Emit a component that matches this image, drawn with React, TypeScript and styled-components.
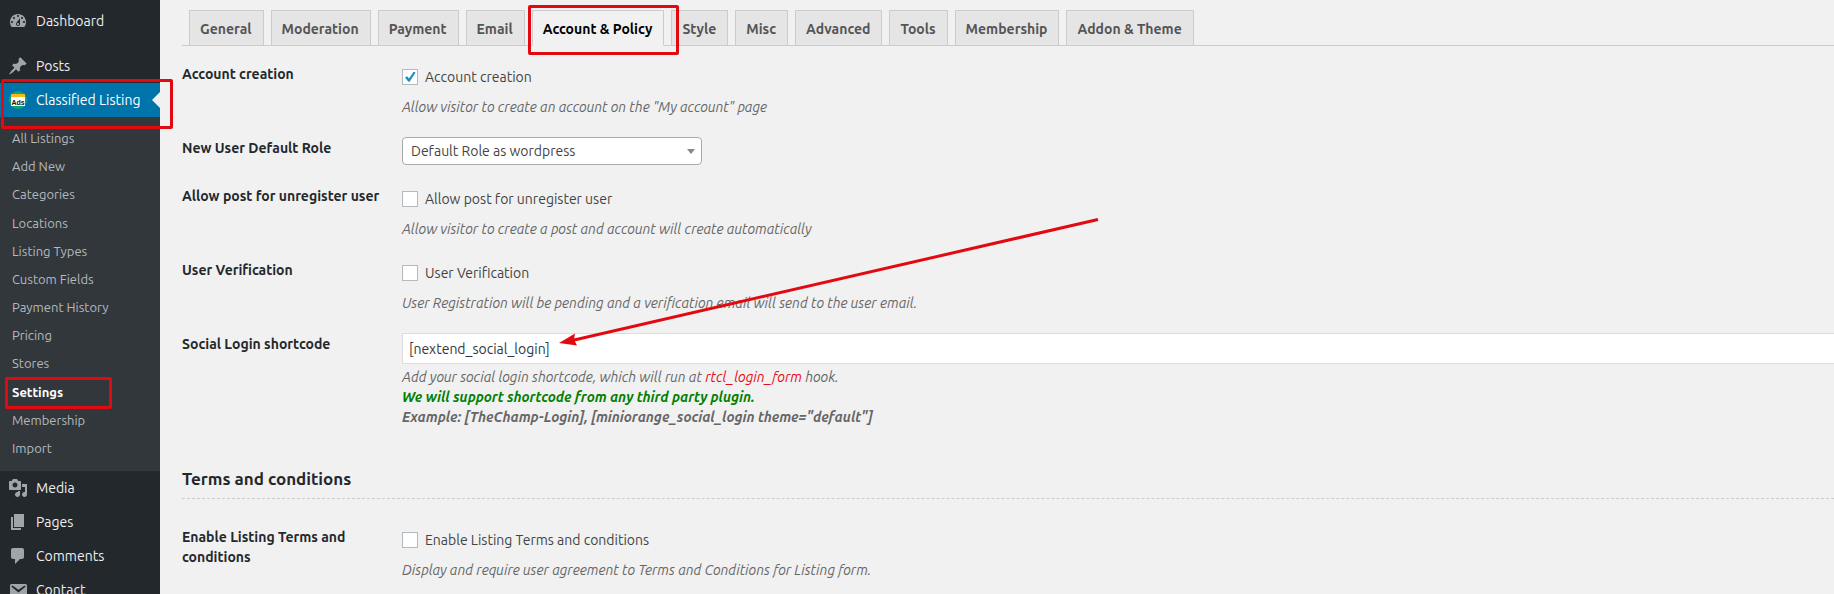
import React from "react";
import styled, { createGlobalStyle, css } from "styled-components";

const RED = "#e20a10";

const GlobalStyle = createGlobalStyle`
  *, *::before, *::after { box-sizing: border-box; }
  body {
    margin: 0;
    background: #f1f1f1;
    color: #444;
    font: 14px/20px Ubuntu, "Open Sans", "Noto Sans", sans-serif;
  }
`;

const Shell = styled.div`
  position: relative;
  display: flex;
  height: 100vh;
  overflow: hidden;
`;

/* ---------- Sidebar ---------- */

const Sidebar = styled.nav`
  flex: 0 0 160px;
  padding-top: 4px;
  background: #23282d;
`;

const MenuGroup = styled.ul`
  margin: 0 0 11px;
  padding: 0;
  list-style: none;
`;

const MenuItem = styled.li`
  position: relative;
`;

const MenuLink = styled.a<{ $current?: boolean }>`
  position: relative;
  display: flex;
  align-items: center;
  gap: 8px;
  height: 34px;
  padding-left: 8px;
  color: #eee;
  text-decoration: none;
  white-space: nowrap;

  ${({ $current }) =>
    $current &&
    css`
      background: #0073aa;
      color: #fff;

      &::after {
        content: "";
        position: absolute;
        right: 0;
        top: 9px;
        border: solid transparent;
        border-width: 8px 8px 8px 0;
        border-right-color: #f1f1f1;
      }
    `}
`;

const MenuIcon = styled.svg`
  flex: none;
  width: 20px;
  height: 20px;
  fill: #a0a5aa;
`;

const Submenu = styled.ul`
  display: grid;
  grid-auto-rows: 1fr;
  min-height: 354px;
  margin: 0;
  padding: 7px 0 9px;
  list-style: none;
  background: #32373c;
`;

const SubmenuItem = styled.li`
  position: relative;
  display: flex;
  align-items: center;
  padding-left: 12px;
`;

const SubmenuLink = styled.a<{ $current?: boolean }>`
  font-size: 13px;
  font-weight: ${({ $current }) => ($current ? 700 : 400)};
  color: ${({ $current }) => ($current ? "#fff" : "#b4b9be")};
  text-decoration: none;
`;

/* ---------- Annotations ---------- */

const Highlight = styled.span<{ $inset: string }>`
  position: absolute;
  z-index: 2;
  inset: ${({ $inset }) => $inset};
  border: 3px solid ${RED};
  border-radius: 2px;
  pointer-events: none;
`;

const Arrow = styled.svg`
  position: absolute;
  z-index: 3;
  left: 558px;
  top: 216px;
  width: 544px;
  height: 132px;
  pointer-events: none;
`;

/* ---------- Main ---------- */

const Main = styled.main`
  flex: 1;
  min-width: 0;
  padding: 10px 0 0 22px;
`;

const Tabs = styled.nav`
  display: flex;
  gap: 7px;
  padding-left: 7px;
  border-bottom: 1px solid #ccc;
  margin-bottom: 7px;
`;

const Tab = styled.a<{ $active?: boolean }>`
  position: relative;
  margin-bottom: -1px;
  padding: 6px 11px 4px 10px;
  border: 1px solid #ccc;
  border-bottom-color: ${({ $active }) => ($active ? "#f1f1f1" : "#ccc")};
  background: ${({ $active }) => ($active ? "#f1f1f1" : "#e5e5e5")};
  color: ${({ $active }) => ($active ? "#000" : "#555")};
  font-weight: 700;
  line-height: 24px;
  text-decoration: none;
  white-space: nowrap;
`;

const Row = styled.div`
  display: grid;
  grid-template-columns: 210px 1fr;
  column-gap: 10px;
  padding: 10px 0;
`;

const titleStyle = css`
  padding-top: 1px;
  color: #23282d;
  font-weight: 700;
`;

const RowTitle = styled.div`
  ${titleStyle}
`;

const RowTitleLabel = styled.label`
  ${titleStyle}
`;

const CheckLabel = styled.label`
  display: flex;
  align-items: center;
  gap: 7px;
  height: 28px;
`;

const Checkbox = styled.input`
  appearance: none;
  flex: none;
  width: 16px;
  height: 16px;
  margin: 0;
  border: 1px solid #b4b9be;
  background: #fff;

  &:checked {
    background: #fff
      url("data:image/svg+xml,%3Csvg xmlns='http://www.w3.org/2000/svg' viewBox='0 0 14 14'%3E%3Cpath d='M2 7.6 4 6.2 6 8.6 10.6 1.8 12.6 2.6 6.6 11.8 5.4 11.8Z' fill='%231e8cbe'/%3E%3C/svg%3E")
      center / 14px 14px no-repeat;
  }
`;

const Description = styled.p<{ $tight?: boolean }>`
  margin: ${({ $tight }) => ($tight ? 3 : 6)}px 0 0;
  color: #666;
  font-style: italic;
`;

const Hook = styled.span`
  color: #e60a14;
`;

const Support = styled.strong`
  color: green;
  font-weight: 700;
`;

const Example = styled.strong`
  font-weight: 700;
`;

const SelectWrap = styled.div`
  position: relative;
  width: 300px;

  &::after {
    content: "";
    position: absolute;
    right: 7px;
    top: 12px;
    border: solid transparent;
    border-width: 5px 4px 0;
    border-top-color: #888;
  }
`;

const Select = styled.select`
  appearance: none;
  display: block;
  width: 100%;
  height: 28px;
  padding: 0 24px 0 8px;
  border: 1px solid #aaa;
  border-radius: 4px;
  background: #fff;
  color: #444;
  font: inherit;
`;

const TextInput = styled.input`
  display: block;
  width: 100%;
  height: 31px;
  padding: 0 6px;
  border: 1px solid #ddd;
  border-right: 0;
  background: #fff;
  color: #32373c;
  font: inherit;
`;

const SectionHeading = styled.h2`
  margin: 31px 0 17px;
  padding-bottom: 8px;
  border-bottom: 1px dashed #ccc;
  color: #23282d;
  font-size: 17px;
  font-weight: 700;
  line-height: 22px;
`;

const icons: Record<string, string> = {
  dashboard:
    "M3.76 16h12.48c1.1-1.37 1.76-3.11 1.76-5 0-4.42-3.58-8-8-8s-8 3.58-8 8c0 1.89.66 3.63 1.76 5zM10 4c.55 0 1 .45 1 1s-.45 1-1 1-1-.45-1-1 .45-1 1-1zM6 6c.55 0 1 .45 1 1s-.45 1-1 1-1-.45-1-1 .45-1 1-1zm8 0c.55 0 1 .45 1 1s-.45 1-1 1-1-.45-1-1 .45-1 1-1zm-5.37 5.55L12 7v6c0 1.1-.9 2-2 2s-2-.9-2-2c0-.57.24-1.08.63-1.45zM4 10c.55 0 1 .45 1 1s-.45 1-1 1-1-.45-1-1 .45-1 1-1zm12 0c.55 0 1 .45 1 1s-.45 1-1 1-1-.45-1-1 .45-1 1-1zm-5 3c0-.55-.45-1-1-1s-1 .45-1 1 .45 1 1 1 1-.45 1-1z",
  posts:
    "M10.44 3.02l1.82-1.82 6.36 6.35-1.83 1.82c-1.05-.68-2.48-.57-3.41.36l-.75.75c-.92.93-1.04 2.35-.35 3.41l-1.83 1.82-2.41-2.41-2.8 2.79c-.42.42-3.38 2.71-3.8 2.29s1.86-3.39 2.28-3.81l2.79-2.79L4.1 9.36l1.83-1.82c1.05.69 2.48.57 3.4-.36l.75-.75c.93-.92 1.05-2.35.36-3.41z",
  media:
    "M13 11V4c0-.55-.45-1-1-1h-1.67L9 1H5L3.67 3H2c-.55 0-1 .45-1 1v7c0 .55.45 1 1 1h10c.55 0 1-.45 1-1zM7 4.5c1.38 0 2.5 1.12 2.5 2.5S8.38 9.5 7 9.5 4.5 8.38 4.5 7 5.62 4.5 7 4.5zM14 6h5v10.5c0 1.38-1.12 2.5-2.5 2.5S14 17.88 14 16.5s1.12-2.5 2.5-2.5c.17 0 .34.02.5.05V9h-3V6zm-4 8.05V13h2v3.5c0 1.38-1.12 2.5-2.5 2.5S7 17.88 7 16.5 8.12 14 9.5 14c.17 0 .34.02.5.05z",
  pages: "M6 15V2h10v13H6zm-1 1h8v2H3V5h2v11z",
  comments:
    "M5 2h9c1.1 0 2 .9 2 2v7c0 1.1-.9 2-2 2h-2l-5 5v-5H5c-1.1 0-2-.9-2-2V4c0-1.1.9-2 2-2z",
  contact:
    "M3.87 4h13.25C18.37 4 19 4.59 19 5.79v8.42c0 1.19-.63 1.79-1.88 1.79H3.87c-1.25 0-1.88-.6-1.88-1.79V5.79C1.99 4.59 2.62 4 3.87 4zm6.62 8.6l6.74-5.53c.24-.2.43-.66.13-1.07-.29-.41-.82-.42-1.17-.17l-5.7 3.86L4.8 5.83c-.35-.25-.88-.24-1.17.17-.3.41-.11.87.13 1.07z",
};

function Icon({ name }: { name: string }) {
  return (
    <MenuIcon viewBox="0 0 20 20" aria-hidden="true">
      <path fillRule="evenodd" d={icons[name]} />
    </MenuIcon>
  );
}

function AdsIcon() {
  return (
    <MenuIcon viewBox="0 0 20 20" aria-hidden="true">
      <circle cx="10" cy="10" r="9" fill="#0fa573" />
      <rect x="3" y="4" width="14" height="4" fill="#fbb81b" />
      <rect x="3" y="7" width="14" height="9" fill="#fff" />
      <text
        x="10"
        y="15"
        textAnchor="middle"
        fontFamily="'Liberation Sans', sans-serif"
        fontSize="7"
        fontWeight="700"
        fill="#111"
      >
        Ads
      </text>
    </MenuIcon>
  );
}

const submenu = [
  "All Listings",
  "Add New",
  "Categories",
  "Locations",
  "Listing Types",
  "Custom Fields",
  "Payment History",
  "Pricing",
  "Stores",
  "Settings",
  "Membership",
  "Import",
];

const tabs = [
  "General",
  "Moderation",
  "Payment",
  "Email",
  "Account & Policy",
  "Style",
  "Misc",
  "Advanced",
  "Tools",
  "Membership",
  "Addon & Theme",
];

function MenuEntry({ icon, label }: { icon: string; label: string }) {
  return (
    <MenuItem>
      <MenuLink href="#">
        <Icon name={icon} />
        {label}
      </MenuLink>
    </MenuItem>
  );
}

function CheckRow(props: {
  title: string;
  description: string;
  checked?: boolean;
}) {
  return (
    <Row>
      <RowTitle>{props.title}</RowTitle>
      <div>
        <CheckLabel>
          <Checkbox type="checkbox" defaultChecked={props.checked} />
          {props.title}
        </CheckLabel>
        <Description>{props.description}</Description>
      </div>
    </Row>
  );
}

export default function App() {
  return (
    <Shell>
      <GlobalStyle />
      <Sidebar>
        <MenuGroup>
          <MenuEntry icon="dashboard" label="Dashboard" />
        </MenuGroup>
        <MenuGroup>
          <MenuEntry icon="posts" label="Posts" />
          <MenuItem>
            <MenuLink href="#" $current>
              <AdsIcon />
              Classified Listing
              <Highlight $inset="-4px -13px -12px 1px" />
            </MenuLink>
            <Submenu>
              {submenu.map((label) => (
                <SubmenuItem key={label}>
                  <SubmenuLink href="#" $current={label === "Settings"}>
                    {label}
                  </SubmenuLink>
                  {label === "Settings" && (
                    <Highlight $inset="0 48px -3px 5px" />
                  )}
                </SubmenuItem>
              ))}
            </Submenu>
          </MenuItem>
          <MenuEntry icon="media" label="Media" />
          <MenuEntry icon="pages" label="Pages" />
          <MenuEntry icon="comments" label="Comments" />
          <MenuEntry icon="contact" label="Contact" />
        </MenuGroup>
      </Sidebar>

      <Main>
        <Tabs>
          {tabs.map((label) => {
            const active = label === "Account & Policy";
            return (
              <Tab key={label} href="#" $active={active}>
                {label}
                {active && <Highlight $inset="-6px -16px -10px -5px" />}
              </Tab>
            );
          })}
        </Tabs>

        <form>
          <CheckRow
            title="Account creation"
            description={'Allow visitor to create an account on the "My account" page'}
            checked
          />
          <Row>
            <RowTitleLabel htmlFor="role">New User Default Role</RowTitleLabel>
            <SelectWrap>
              <Select id="role">
                <option>Default Role as wordpress</option>
              </Select>
            </SelectWrap>
          </Row>
          <CheckRow
            title="Allow post for unregister user"
            description="Allow visitor to create a post and account will create automatically"
          />
          <CheckRow
            title="User Verification"
            description="User Registration will be pending and a verification email will send to the user email."
          />
          <Row>
            <RowTitleLabel htmlFor="shortcode">
              Social Login shortcode
            </RowTitleLabel>
            <div>
              <TextInput
                id="shortcode"
                type="text"
                defaultValue="[nextend_social_login]"
              />
              <Description $tight>
                Add your social login shortcode, which will run at{" "}
                <Hook>rtcl_login_form</Hook> hook.
                <br />
                <Support>
                  We will support shortcode from any third party plugin.
                </Support>
                <br />
                <Example>
                  Example: [TheChamp-Login], [miniorange_social_login
                  theme="default"]
                </Example>
              </Description>
            </div>
          </Row>
          <SectionHeading>Terms and conditions</SectionHeading>
          <CheckRow
            title="Enable Listing Terms and conditions"
            description="Display and require user agreement to Terms and Conditions for Listing form."
          />
        </form>
      </Main>

      <Arrow viewBox="0 0 544 132" aria-hidden="true">
        <path d="M540 3.5 14 124.5" stroke={RED} strokeWidth="3" />
        <path d="M1 127 17 117.5 16 123.5 19 129.5Z" fill={RED} />
      </Arrow>
    </Shell>
  );
}
